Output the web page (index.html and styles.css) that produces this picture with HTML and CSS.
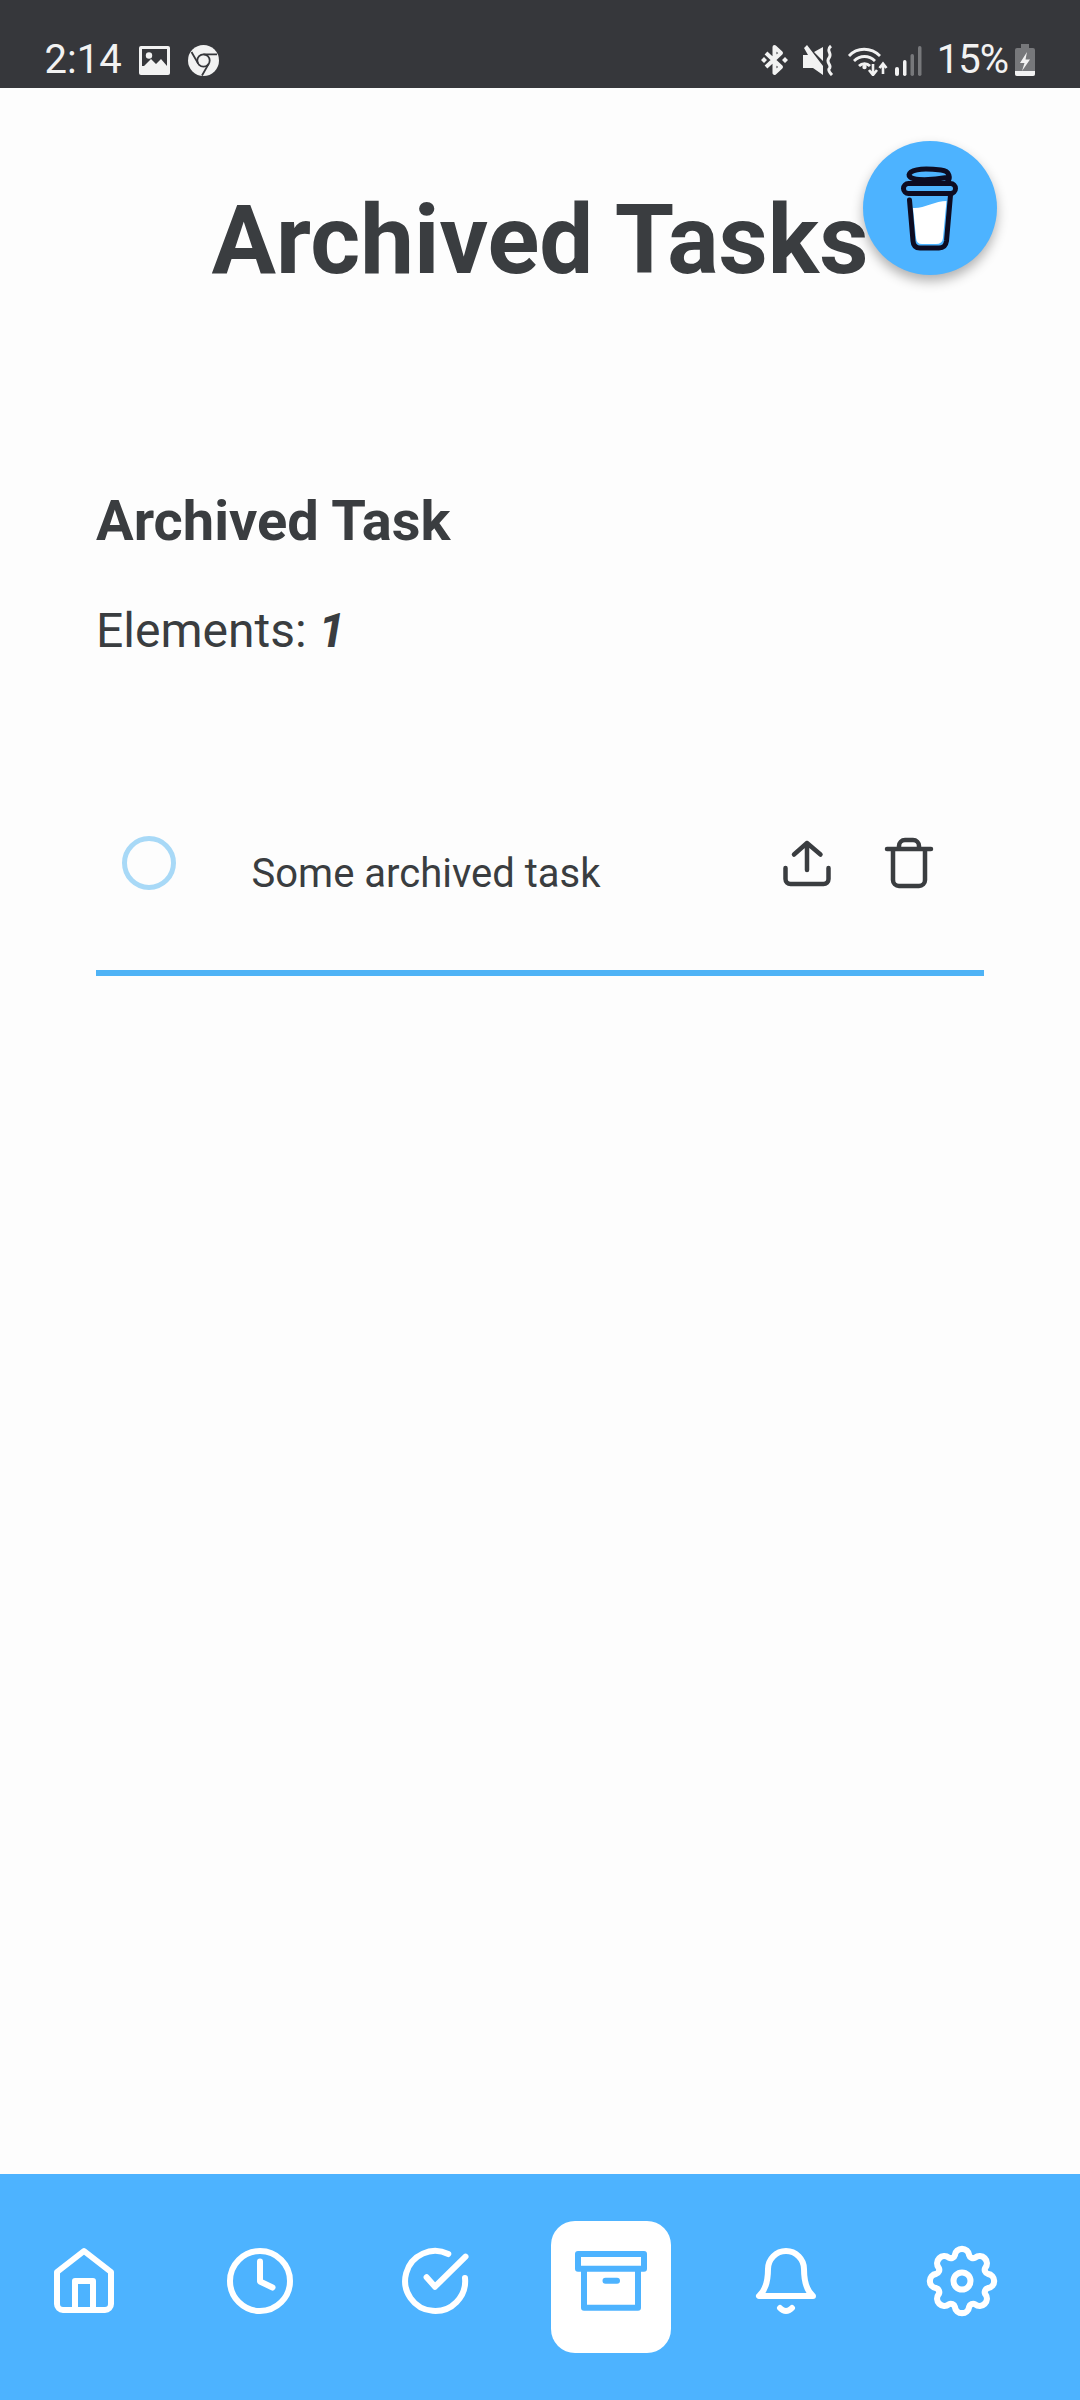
FILE: index.html
```html
<!DOCTYPE html>
<html lang="en">
<head>
    <meta charset="UTF-8">
    <meta name="viewport" content="width=device-width, initial-scale=1.0">
    <title>Archived Tasks</title>
    <link rel="stylesheet" href="styles.css">
</head>
<body>
<div class="page">
    <!-- Status bar -->
    <header class="status-bar">
        <div class="status-left">
            <span class="status-text">2:14</span>
            <svg class="st-image" viewBox="0 0 31 29"><rect width="31" height="29" rx="2" fill="#f2f2f2"/><rect x="3" y="3" width="25" height="17" fill="#36373b"/><circle cx="10" cy="9.5" r="3.2" fill="#f2f2f2"/><path d="M3 22 L12 13 L17 18 L22 13 L28 20 V24 H3Z" fill="#f2f2f2"/></svg>
            <svg class="st-chrome" viewBox="0 0 31 31"><circle cx="15.5" cy="15.5" r="15.5" fill="#f2f2f2"/><circle cx="15.5" cy="15.5" r="6.2" fill="none" stroke="#36373b" stroke-width="1.8"/><path d="M15.5 9.3 H29 M10.2 18.6 L3.5 7 M20.8 18.6 L14 30.5" stroke="#36373b" stroke-width="1.8" fill="none"/></svg>
        </div>
        <div class="status-right">
            <svg class="st-bt" viewBox="0 0 29 32"><path d="M6 9 L21 23 L14.5 29 V3 L21 9 L6 23" fill="none" stroke="#f2f2f2" stroke-width="4" stroke-linejoin="round"/><path d="M1 16 L4 13 L7 16 L4 19Z M22 16 L25 13 L28 16 L25 19Z" fill="#f2f2f2"/></svg>
            <svg class="st-mute" viewBox="0 0 32 32"><path d="M0 11 H5 L1 4 L4 1 L20 22 V31 L10 24 H0Z M11 8 L20 3 V17Z" fill="#f2f2f2"/><path d="M28 2 C22 7 30 9 26 14 C22 19 30 21 26 25 C25 27 27 29 29 31" fill="none" stroke="#f2f2f2" stroke-width="3"/></svg>
            <svg class="st-wifi" viewBox="0 0 41 32"><path d="M2 12 C10 3 24 3 33 12 M7 17 C13 11 22 11 28 17 M12 22 C15 19 20 19 23 22" fill="none" stroke="#f2f2f2" stroke-width="2.8"/><circle cx="17.5" cy="23" r="2.2" fill="#f2f2f2"/><path d="M26 20 V30 M22 26 L26 31 L30 26 M36 30 V20 M32.5 24 L36 19.5 L39.5 24" fill="none" stroke="#f2f2f2" stroke-width="2.6"/></svg>
            <svg class="st-signal" viewBox="0 0 27 30"><rect x="0" y="21" width="4" height="9" rx="2" fill="#f2f2f2"/><rect x="8" y="14" width="3.5" height="16" rx="1.7" fill="#f2f2f2"/><rect x="15.5" y="8" width="3.5" height="22" rx="1.7" fill="#77787b"/><rect x="23" y="0" width="3.5" height="30" rx="1.7" fill="#77787b"/></svg>
            <span class="status-text status-pct">15%</span>
            <svg class="st-battery" viewBox="0 0 20 32"><path d="M6 0 H14 V4 H18 Q20 4 20 6 V30 Q20 32 18 32 H2 Q0 32 0 30 V6 Q0 4 2 4 H6Z" fill="#77787b"/><path d="M0 27 H20 V30 Q20 32 18 32 H2 Q0 32 0 30Z" fill="#f2f2f2"/><path d="M12 8 L5 19 H9.5 L7 27 L15 15.5 H10.5Z" fill="#f2f2f2"/></svg>
        </div>
    </header>

    <main class="content">
        <h1 class="page-title">Archived Tasks</h1>

        <!-- Coffee button -->
        <button class="fab">
            <svg class="fab-icon" viewBox="0 0 134 134">
                <path d="M50 67 C60 68 72 60 83.5 60 L80 97 Q79.5 103 73 103 H59 Q53.5 103 53 97Z" fill="#fff"/>
                <path d="M46.5 59 L50 100 Q50.5 107 57 107 H76 Q82.5 107 83.5 100 L87.5 54" fill="none" stroke="#0d0c22" stroke-width="5" stroke-linecap="round"/>
                <rect x="40.5" y="42.5" width="52" height="10" rx="5" fill="none" stroke="#0d0c22" stroke-width="5"/>
                <path d="M84 42 C88 37 87 30 78 29 C66 27.5 53 27.5 48 31 C43 35 48 38 56 38.5 C66 39 76 38 84 36.5" fill="none" stroke="#0d0c22" stroke-width="5" stroke-linecap="round"/>
            </svg>
        </button>

        <section class="task-section">
            <h2 class="section-title">Archived Task</h2>
            <p class="section-count">Elements: <b><i>1</i></b></p>

            <div class="task-row">
                <span class="task-check"></span>
                <span class="task-name">Some archived task</span>
                <div class="task-actions">
                    <svg class="task-icon" viewBox="0 0 60 60"><path d="M30 10 V37 M17 21.5 L30 10 L43.5 21.5 M8.5 35 V46 a5 5 0 0 0 5 5 H46.5 a5 5 0 0 0 5 -5 V35"/></svg>
                    <svg class="task-icon" viewBox="0 0 60 60"><path d="M14 16 V47 a6 6 0 0 0 6 6 H40 a6 6 0 0 0 6 -6 V16 M8 16 H52 M20 16 V13 a6 6 0 0 1 6 -6 H34 a6 6 0 0 1 6 6 V16"/></svg>
                </div>
            </div>
        </section>
    </main>

    <!-- Bottom navigation -->
    <nav class="bottom-nav">
        <a class="nav-item">
            <svg class="nav-icon" viewBox="0 0 80 80"><path d="M40 10 L67 31 V63 a6 6 0 0 1 -6 6 H19 a6 6 0 0 1 -6 -6 V31Z M31 69 V40 H49 V69"/></svg>
        </a>
        <a class="nav-item">
            <svg class="nav-icon" viewBox="0 0 80 80"><circle cx="40" cy="40" r="30"/><path d="M40 20.5 V40.5 L52.5 46.5"/></svg>
        </a>
        <a class="nav-item">
            <svg class="nav-icon" viewBox="0 0 80 80"><path d="M53.3 13 A30 30 0 1 0 70 37 M31.6 36.3 L40 45.7 L70.5 15.7"/></svg>
        </a>
        <a class="nav-item nav-item-active">
            <svg class="nav-icon" viewBox="0 0 80 80"><path d="M7 13 H73 V27.7 H7Z M13 27.7 V66.7 H67 V27.7 M34.5 39.7 H46"/></svg>
        </a>
        <a class="nav-item">
            <svg class="nav-icon" viewBox="0 0 80 80"><path d="M13 55 H67 C60 49 58 38 58 28 A18 18 0 0 0 22 28 C22 38 20 49 13 55Z M34 67 Q40 73 46 67"/></svg>
        </a>
        <a class="nav-item">
            <svg class="nav-icon" viewBox="0 0 80 80"><circle cx="40" cy="40" r="8.5"/><path transform="translate(40 40) scale(1.03) translate(-40 -40)" d="M65.05 46.95 A4 4 0 0 0 62.63 52.8 A7 7 0 0 1 52.8 62.63 A4 4 0 0 0 46.95 65.05 A7 7 0 0 1 33.05 65.05 A4 4 0 0 0 27.2 62.63 A7 7 0 0 1 17.37 52.8 A4 4 0 0 0 14.95 46.95 A7 7 0 0 1 14.95 33.05 A4 4 0 0 0 17.37 27.2 A7 7 0 0 1 27.2 17.37 A4 4 0 0 0 33.05 14.95 A7 7 0 0 1 46.95 14.95 A4 4 0 0 0 52.8 17.37 A7 7 0 0 1 62.63 27.2 A4 4 0 0 0 65.05 33.05 A7 7 0 0 1 65.05 46.95Z"/></svg>
        </a>
    </nav>
</div>
</body>
</html>
```
FILE: styles.css
```css
/* Page frame */
body {
    margin: 0;
    font-family: Roboto, sans-serif;
    background-color: #fdfdfd;
    color: #3a3d40;
}

.page {
    width: 1080px;
    height: 2400px;
    display: flex;
    flex-direction: column;
    overflow: hidden;
}

/* Status bar */
.status-bar {
    height: 88px;
    flex-shrink: 0;
    box-sizing: border-box;
    padding: 0 45px 12px 44.5px;
    display: flex;
    justify-content: space-between;
    align-items: flex-end;
    background-color: #36373b;
    color: #f2f2f2;
}

.status-left,
.status-right {
    display: flex;
    align-items: flex-end;
}

.status-text {
    font-size: 40px;
    line-height: 32px;
    height: 32px;
}

.status-pct {
    letter-spacing: -1px;
    margin-left: 15px;
}

.st-image { width: 31px; height: 29px; margin: 0 0 1px 17px; }
.st-chrome { width: 31px; height: 31px; margin-left: 18px; }
.st-bt { width: 29px; height: 32px; }
.st-mute { width: 32px; height: 32px; margin-left: 14px; }
.st-wifi { width: 41px; height: 32px; margin-left: 12px; }
.st-signal { width: 27px; height: 30px; margin-left: 7px; }
.st-battery { width: 20px; height: 32px; margin-left: 7px; }

/* Main content */
.content {
    flex: 1;
    position: relative;
    padding-top: 96px;
}

.page-title {
    margin: 0;
    font-size: 96px;
    line-height: 112px;
    font-weight: 700;
    text-align: center;
}

.fab {
    position: absolute;
    left: 863px;
    top: 53px;
    width: 134px;
    height: 134px;
    padding: 0;
    border: none;
    border-radius: 50%;
    background-color: #4db3ff;
    box-shadow: 0 6px 12px rgba(0, 0, 0, 0.3);
}

.fab-icon {
    display: block;
    width: 134px;
    height: 134px;
}

.task-section {
    padding: 0 96px;
    margin-top: 193px;
}

.section-title {
    margin: 0;
    font-size: 56px;
    line-height: 64px;
    font-weight: 700;
}

.section-count {
    margin: 50px 0 0;
    font-size: 48px;
    line-height: 56px;
}

/* Task row */
.task-row {
    display: flex;
    align-items: center;
    margin-top: 169px;
    padding: 0 45px 72px 26px;
    border-bottom: 6px solid #4fb3f6;
}

.task-check {
    width: 54px;
    height: 54px;
    box-sizing: border-box;
    border: 5px solid #a8d9f7;
    border-radius: 50%;
    flex-shrink: 0;
}

.task-name {
    flex: 1;
    margin: 22px 0 0 75.5px;
    font-size: 40px;
    line-height: 48px;
}

.task-actions {
    display: flex;
    gap: 42px;
}

.task-icon {
    display: block;
    width: 60px;
    height: 60px;
    fill: none;
    stroke: #3a3d40;
    stroke-width: 4.5;
    stroke-linecap: round;
    stroke-linejoin: round;
}

/* Bottom navigation */
.bottom-nav {
    height: 226px;
    flex-shrink: 0;
    box-sizing: border-box;
    padding: 47px 58.5px 0 24px;
    display: flex;
    justify-content: space-between;
    align-items: flex-start;
    background-color: #4db3ff;
}

.nav-item {
    width: 120px;
    height: 132px;
    box-sizing: border-box;
    padding-top: 20px;
    display: flex;
    justify-content: center;
    align-items: flex-start;
    border-radius: 24px;
    stroke: #fff;
}

.nav-item-active {
    background-color: #fff;
    stroke: #4db3ff;
}

.nav-icon {
    display: block;
    width: 80px;
    height: 80px;
    fill: none;
    stroke-width: 6;
    stroke-linecap: round;
    stroke-linejoin: round;
}
```
